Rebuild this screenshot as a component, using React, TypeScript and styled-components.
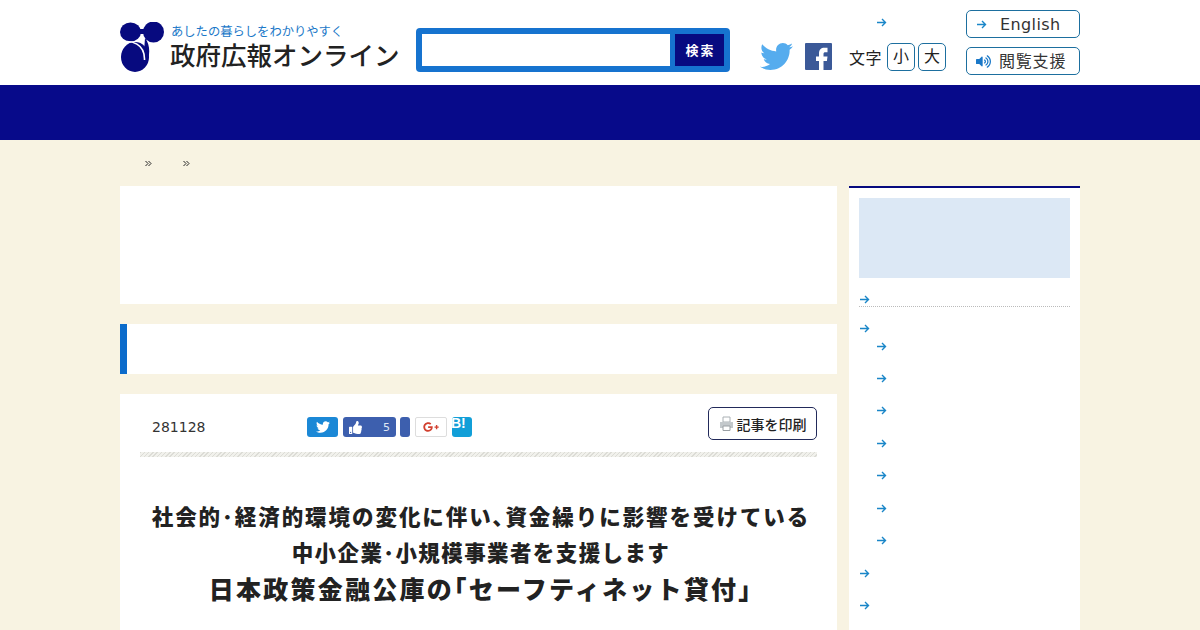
import React from "react";
import styled, { createGlobalStyle } from "styled-components";
import { FaTwitter, FaThumbsUp, FaGooglePlusG, FaVolumeUp } from "react-icons/fa";

const CJK = `"Noto Sans CJK JP", "Noto Sans", sans-serif`;
const LATIN = `"DejaVu Sans", "Noto Sans CJK JP", sans-serif`;

const GlobalStyle = createGlobalStyle`
  html, body {
    margin: 0;
    padding: 0;
    height: 630px;
    overflow: hidden;
    background: #f8f3e2;
    font-family: ${LATIN};
    color: #333;
  }
  * { box-sizing: border-box; }
`;

const Arrow = ({ size = 11 }: { size?: number }) => (
  <svg width={size} height={size} viewBox="0 0 11 11" fill="none" stroke="#1a86c8" strokeWidth="1.4">
    <path d="M1 5.5h8.500M6 2l3.500 3.500L6 9" />
  </svg>
);

const Chevrons = () => (
  <svg width="7" height="7" viewBox="0 0 7 7" fill="none" stroke="#222" strokeWidth="1">
    <path d="M.5 1l2.500 2.500L.5 6M3.500 1L6 3.500 3.500 6" />
  </svg>
);

export default function App() {
  return (
    <>
      <GlobalStyle />
      <Header>
        <HeaderInner>
          <Logo>
            <svg width="44" height="50" viewBox="0 0 44 50">
              <ellipse cx="10.500" cy="10" rx="10.500" ry="9.500" fill="#070a7f" />
              <circle cx="33.500" cy="10" r="10.500" fill="#070a7f" />
              <rect x="18" y="7" width="8" height="5" fill="#070a7f" />
              <path d="M25 16C31 24 30 34 26 43L22 42 24 30Z" fill="#070a7f" />
              <ellipse cx="15" cy="35" rx="14" ry="15" fill="#070a7f" />
              <path d="M0 20.500C12 17.500 25 22 24.500 38" stroke="#fff" strokeWidth="1.600" fill="none" />
            </svg>
            <LogoText>
              <LogoTag>あしたの暮らしをわかりやすく</LogoTag>
              <LogoName>政府広報オンライン</LogoName>
            </LogoText>
          </Logo>
          <SearchBox>
            <SearchInput />
            <SearchButton>検索</SearchButton>
          </SearchBox>
          <Social>
            <FaTwitter size={33} color="#55acee" />
            <svg width="27" height="27" viewBox="0 0 27 27">
              <rect width="27" height="27" rx="1" fill="#3b5998" />
              <path d="M14 27v-9h-3v-4.500h3v-3c0-4 2-5.800 5.500-5.800h3v4.500h-2c-1.500 0-2 .5-2 2v2.300h4l-.6 4.500h-3.400v9z" fill="#fff" />
            </svg>
          </Social>
          <SizeColumn>
            <SizeArrow>
              <Arrow />
            </SizeArrow>
            <SizeRow>
              <SizeLabel>文字</SizeLabel>
              <SizeButton>小</SizeButton>
              <SizeButton>大</SizeButton>
            </SizeRow>
          </SizeColumn>
          <UtilColumn>
            <UtilButton>
              <Arrow />
              <UtilText $wide>English</UtilText>
            </UtilButton>
            <UtilButton>
              <FaVolumeUp size={15} color="#1a78c8" />
              <UtilText>閲覧支援</UtilText>
            </UtilButton>
          </UtilColumn>
        </HeaderInner>
      </Header>
      <NavBar />
      <Page>
        <Crumbs>
          <Chevrons />
          <Chevrons />
        </Crumbs>
        <Columns>
          <Main>
            <HeroBox />
            <HeadingBox />
            <Article>
              <MetaRow>
                <DateText>281128</DateText>
                <Shares>
                  <ShareButton $bg="#1b88d6" $w={31}>
                    <FaTwitter size={14} color="#fff" />
                  </ShareButton>
                  <LikeButton>
                    <FaThumbsUp size={13} color="#fff" />
                    <span>5</span>
                  </LikeButton>
                  <ShareButton $bg="#3d5fae" $w={10} />
                  <PlusButton>
                    <FaGooglePlusG size={16} color="#d2402f" />
                  </PlusButton>
                  <HatenaButton>B!</HatenaButton>
                </Shares>
                <PrintButton>
                  <svg width="15" height="15" viewBox="0 0 15 15">
                    <path d="M4 1h7v5H4z" fill="#fff" stroke="#aab0b4" />
                    <path d="M1 6h13v6H1z" fill="#c3c8cb" />
                    <path d="M4 10h7v4.500H4z" fill="#fff" stroke="#9aa0a4" />
                  </svg>
                  記事を印刷
                </PrintButton>
              </MetaRow>
              <Rule />
              <Title>
                <TitleLine $size={21.5} $space={1.95}>社会的･経済的環境の変化に伴い､資金繰りに影響を受けている</TitleLine>
                <TitleLine $size={21.5} $space={1.4}>中小企業･小規模事業者を支援します</TitleLine>
                <TitleLine $size={25} $space={2.25}>日本政策金融公庫の｢セーフティネット貸付｣</TitleLine>
              </Title>
            </Article>
          </Main>
          <Side>
            <SideBanner />
            <SideItem $ruled>
              <Arrow />
            </SideItem>
            <SideItem $h={23} $top={16}>
              <Arrow />
            </SideItem>
            {[0, 1, 2, 3, 4, 5, 6].map((i) => (
              <SideSubItem key={i}>
                <Arrow />
              </SideSubItem>
            ))}
            <SideItem $h={33} $top={11}>
              <Arrow />
            </SideItem>
            <SideItem $h={26} $top={10}>
              <Arrow />
            </SideItem>
          </Side>
        </Columns>
      </Page>
    </>
  );
}

const Header = styled.header`
  height: 85px;
  background: #fff;
`;

const HeaderInner = styled.div`
  width: 960px;
  margin: 0 auto;
  display: flex;
  align-items: flex-start;
  position: relative;
`;

const Logo = styled.div`
  width: 296px;
  padding-top: 22px;
  display: flex;
  gap: 6px;
`;

const LogoText = styled.div`
  display: flex;
  flex-direction: column;
  font-family: ${CJK};
`;

const LogoTag = styled.div`
  font-size: 12.3px;
  line-height: 16px;
  margin-top: 1px;
  margin-left: 1px;
  color: #1a78c8;
  white-space: nowrap;
`;

const LogoName = styled.div`
  font-size: 25.5px;
  font-weight: 500;
  line-height: 30px;
  color: #222;
  white-space: nowrap;
`;

const SearchBox = styled.div`
  margin-top: 28px;
  width: 314px;
  height: 44px;
  background: #1673cf;
  border-radius: 4px;
  padding: 6px;
  display: flex;
  gap: 5px;
`;

const SearchInput = styled.div`
  flex: 1;
  background: #fff;
`;

const SearchButton = styled.div`
  width: 49px;
  background: #070a80;
  color: #fff;
  font: 700 13px/31px ${CJK};
  letter-spacing: 2px;
  text-indent: 2px;
  text-align: center;
`;

const Social = styled.div`
  margin-left: 30px;
  margin-top: 40px;
  width: 89px;
  display: flex;
  align-items: center;
  gap: 12px;
`;

const SizeColumn = styled.div`
  width: 117px;
  display: flex;
  flex-direction: column;
`;

const SizeArrow = styled.div`
  height: 43px;
  padding: 13px 0 0 27px;
`;

const SizeRow = styled.div`
  display: flex;
  align-items: center;
  gap: 3px;
`;

const SizeLabel = styled.span`
  font: 16px/26px ${CJK};
  letter-spacing: 0.5px;
  color: #222;
  margin-right: 2px;
`;

const SizeButton = styled.div`
  width: 28px;
  height: 28px;
  border: 1px solid #1d6f9f;
  border-radius: 5px;
  font: 16px/23px ${CJK};
  text-align: center;
  color: #222;
`;

const UtilColumn = styled.div`
  position: absolute;
  left: 846px;
  top: 10px;
  display: flex;
  flex-direction: column;
  gap: 9px;
`;

const UtilButton = styled.div`
  width: 114px;
  height: 28px;
  border: 1px solid #1d6f9f;
  border-radius: 5px;
  display: flex;
  align-items: center;
  padding-left: 9px;
  gap: 7px;
`;

const UtilText = styled.span<{ $wide?: boolean }>`
  font-size: 16px;
  line-height: 24px;
  letter-spacing: ${(p) => (p.$wide ? "0.4px" : "0.8px")};
  margin-left: ${(p) => (p.$wide ? "6px" : "1px")};
  padding-top: 1px;
  color: #333;
`;

const NavBar = styled.nav`
  height: 55px;
  background: #070a8a;
`;

const Page = styled.main`
  width: 960px;
  margin: 0 auto;
`;

const Crumbs = styled.div`
  height: 46px;
  padding: 20px 0 0 25px;
  display: flex;
  align-items: flex-start;
  gap: 31px;
`;

const Columns = styled.div`
  display: flex;
  justify-content: space-between;
  align-items: flex-start;
`;

const Main = styled.div`
  width: 717px;
  display: flex;
  flex-direction: column;
  gap: 20px;
`;

const HeroBox = styled.div`
  height: 118px;
  background: #fff;
`;

const HeadingBox = styled.div`
  height: 50px;
  background: #fff;
  border-left: 7px solid #0b6bcb;
`;

const Article = styled.article`
  height: 236px;
  background: #fff;
  padding: 13px 20px 0;
`;

const MetaRow = styled.div`
  display: flex;
  align-items: center;
  height: 33px;
  position: relative;
`;

const DateText = styled.div`
  font-size: 14px;
  padding-left: 12px;
  margin-top: 7px;
  width: 167px;
  color: #333;
`;

const Shares = styled.div`
  display: flex;
  align-items: center;
  gap: 5px;
  margin-top: 7px;
`;

const ShareButton = styled.div<{ $bg: string; $w: number }>`
  width: ${(p) => p.$w}px;
  height: 20px;
  border-radius: 3px;
  background: ${(p) => p.$bg};
  display: flex;
  align-items: center;
  justify-content: center;
`;

const LikeButton = styled.div`
  width: 53px;
  height: 20px;
  margin-right: -1px;
  border-radius: 3px;
  background: #3d5fae;
  color: #dfe6f5;
  font-size: 11px;
  display: flex;
  align-items: center;
  justify-content: space-between;
  padding: 0 6px;
`;

const PlusButton = styled.div`
  width: 32px;
  height: 20px;
  border: 1px solid #ddd;
  border-radius: 2px;
  background: #fff;
  display: flex;
  align-items: center;
  justify-content: center;
`;

const HatenaButton = styled.div`
  width: 20px;
  height: 20px;
  border-radius: 3px;
  background: #119fd8;
  color: #fff;
  font: 700 14px/13px "Liberation Sans", sans-serif;
  text-indent: -1px;
  overflow: hidden;
`;

const PrintButton = styled.div`
  position: absolute;
  right: 0;
  top: 0;
  width: 109px;
  height: 33px;
  border: 1px solid #222a5a;
  border-radius: 5px;
  display: flex;
  align-items: center;
  justify-content: center;
  gap: 3px;
  font: 500 14px/1 ${CJK};
  color: #222;
`;

const Rule = styled.div`
  height: 5px;
  margin-top: 12px;
  background: repeating-linear-gradient(135deg, #dcdcd6 0 1px, #f1f1ec 1px 3px);
`;

const Title = styled.h1`
  margin: 41px 0 0;
  padding-left: 5px;
  display: flex;
  flex-direction: column;
  align-items: center;
  font-family: ${CJK};
  font-weight: 900;
  color: #222;
`;

const TitleLine = styled.span<{ $size: number; $space: number }>`
  font-size: ${(p) => p.$size}px;
  letter-spacing: ${(p) => p.$space}px;
  line-height: 36px;
  white-space: nowrap;
`;

const Side = styled.aside`
  width: 231px;
  height: 444px;
  background: #fff;
  border-top: 2px solid #070a7f;
  padding: 10px;
`;

const SideBanner = styled.div`
  height: 80px;
  background: #dce8f5;
  margin-bottom: 16px;
`;

const SideItem = styled.div<{ $ruled?: boolean; $h?: number; $top?: number }>`
  height: ${(p) => p.$h ?? 13}px;
  display: flex;
  align-items: flex-start;
  padding-top: ${(p) => p.$top ?? 0}px;
  ${(p) => p.$ruled && "border-bottom: 1px dotted #bbb;"}
`;

const SideSubItem = styled.div`
  height: 32.4px;
  padding: 0 0 0 17px;
  display: flex;
  align-items: center;
`;
